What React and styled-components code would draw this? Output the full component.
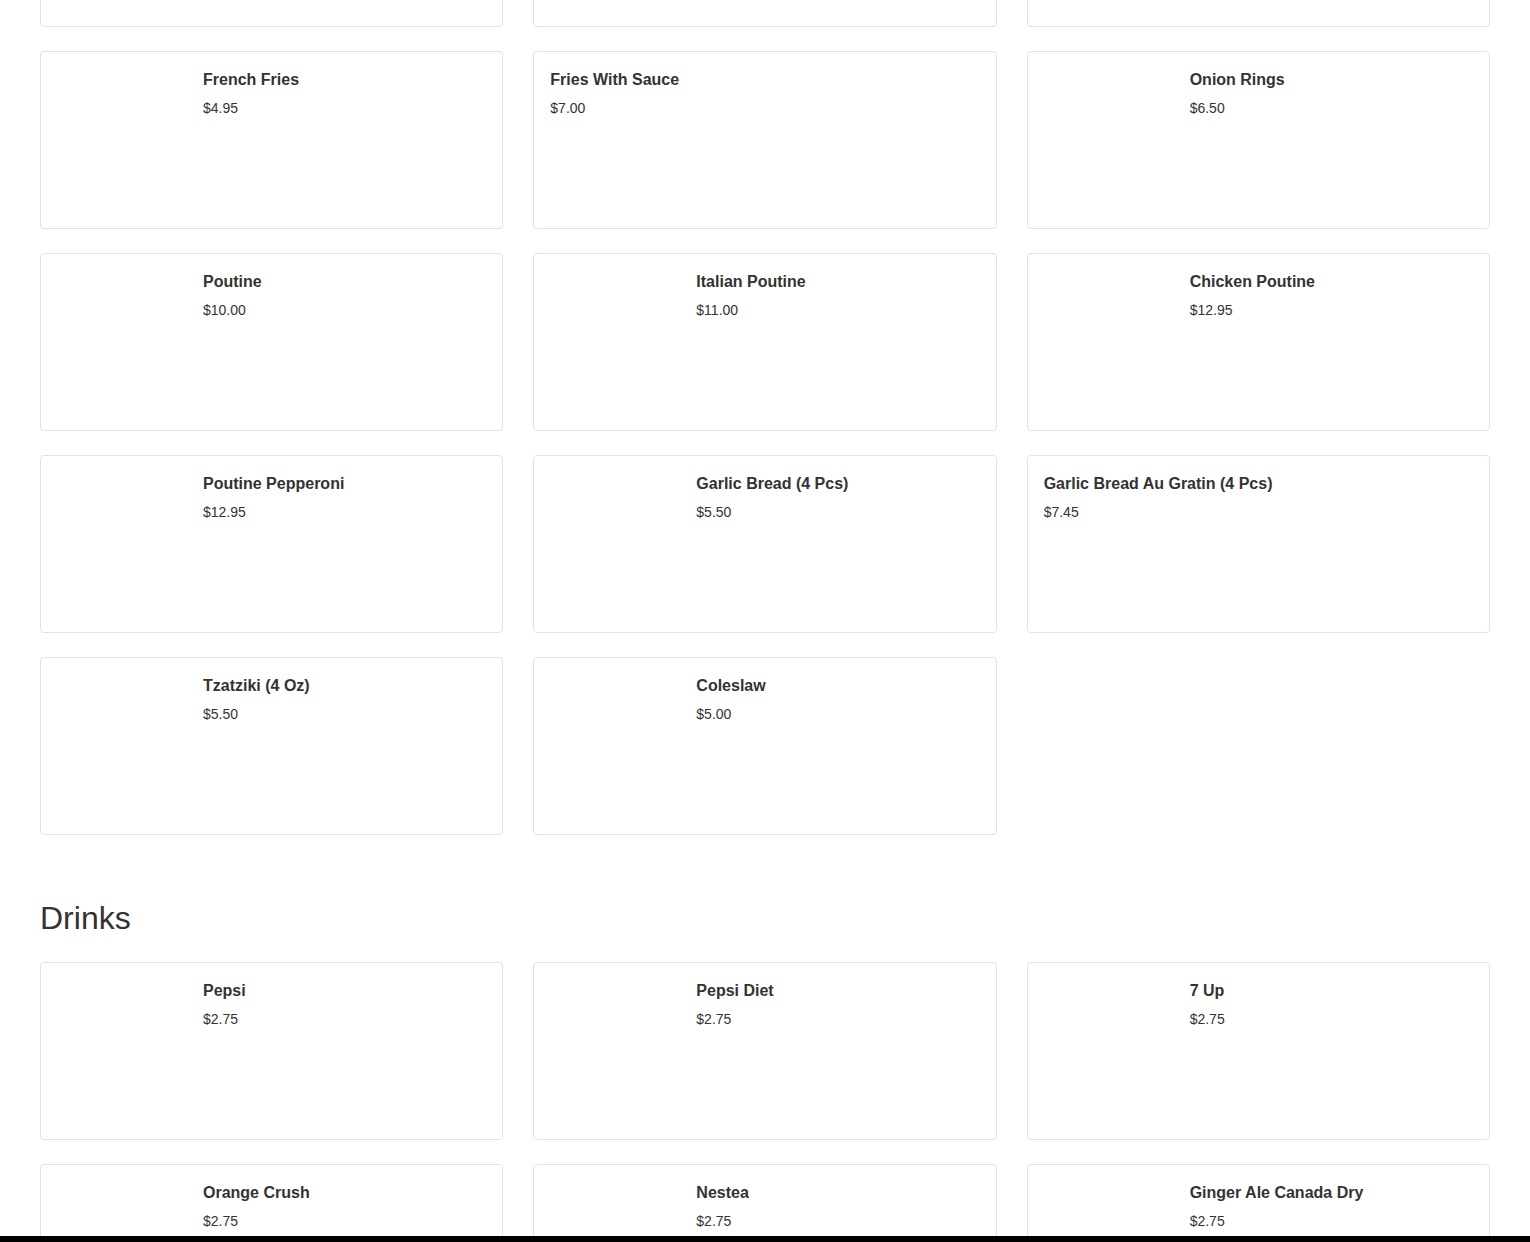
import React from "react";
import styled, { createGlobalStyle } from "styled-components";

const GlobalStyle = createGlobalStyle`
  body {
    margin: 0;
    background: #fff;
    font-family: "Liberation Sans", Arial, sans-serif;
    color: #333;
  }
`;

// the row above the viewport: only the bottom edge of these cards shows
const hiddenRow = [{ id: "a" }, { id: "b" }, { id: "c" }];

const appetizers = [
  { name: "French Fries", price: "$4.95", image: true },
  { name: "Fries With Sauce", price: "$7.00", image: false },
  { name: "Onion Rings", price: "$6.50", image: true },
  { name: "Poutine", price: "$10.00", image: true },
  { name: "Italian Poutine", price: "$11.00", image: true },
  { name: "Chicken Poutine", price: "$12.95", image: true },
  { name: "Poutine Pepperoni", price: "$12.95", image: true },
  { name: "Garlic Bread (4 Pcs)", price: "$5.50", image: true },
  { name: "Garlic Bread Au Gratin (4 Pcs)", price: "$7.45", image: false },
  { name: "Tzatziki (4 Oz)", price: "$5.50", image: true },
  { name: "Coleslaw", price: "$5.00", image: true },
];

const drinks = [
  { name: "Pepsi", price: "$2.75", image: true },
  { name: "Pepsi Diet", price: "$2.75", image: true },
  { name: "7 Up", price: "$2.75", image: true },
  { name: "Orange Crush", price: "$2.75", image: true },
  { name: "Nestea", price: "$2.75", image: true },
  { name: "Ginger Ale Canada Dry", price: "$2.75", image: true },
];

function App() {
  return (
    <>
      <GlobalStyle />
      <Page>
        {/* page is scrolled: the first row sits mostly above the viewport */}
        <Section $scrolled>
          <Grid>
            {hiddenRow.map((c) => (
              <Card key={c.id} />
            ))}
            {appetizers.map((item) => (
              <Item key={item.name} {...item} />
            ))}
          </Grid>
        </Section>
        <Section>
          <Heading>Drinks</Heading>
          <Grid>
            {drinks.map((item) => (
              <Item key={item.name} {...item} />
            ))}
          </Grid>
        </Section>
      </Page>
      <BottomBar />
    </>
  );
}

const Item = ({ name, price, image }) => {
  return (
    <Card>
      {image && <Thumb />}
      <Info>
        <Title>{name}</Title>
        <Price>{price}</Price>
      </Info>
    </Card>
  );
};

const Page = styled.div`
  padding: 0 40px 40px;
`;

const Section = styled.section`
  margin-top: ${(p) => (p.$scrolled ? "-151px" : "64px")};
`;

const Heading = styled.h2`
  margin: 0 0 25px;
  font-size: 32px;
  font-weight: 400;
  line-height: 38px;
  color: #333;
`;

const Grid = styled.div`
  display: grid;
  grid-template-columns: repeat(3, 1fr);
  column-gap: 30px;
  row-gap: 24px;
`;

const Card = styled.div`
  box-sizing: border-box;
  height: 178px;
  display: flex;
  gap: 16px;
  padding: 17px 16px 16px;
  background: #fff;
  border: 1px solid #e2e2e2;
  border-radius: 4px;
`;

const Thumb = styled.div`
  flex: 0 0 130px;
  height: 143px;
  background: #fff;
`;

const Info = styled.div`
  display: flex;
  flex-direction: column;
`;

const Title = styled.h3`
  margin: 0;
  font-size: 16px;
  font-weight: 700;
  line-height: 22px;
  color: #333;
`;

const Price = styled.div`
  margin-top: 7px;
  font-size: 14px;
  line-height: 20px;
  color: #333;
`;

const BottomBar = styled.div`
  position: fixed;
  left: 0;
  right: 0;
  bottom: 0;
  height: 6px;
  background: #000;
`;

export default App;
